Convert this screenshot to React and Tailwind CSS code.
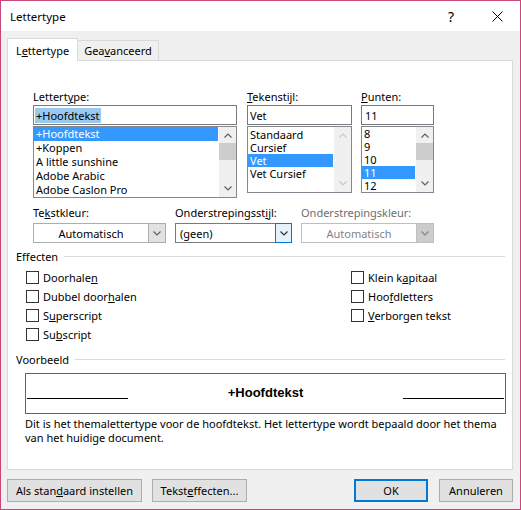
import React from "react";

function U({ children }) {
  return <span className="underline underline-offset-[1px]">{children}</span>;
}

function Chev({ up, color = "#606060" }) {
  return (
    <svg width="8" height="5" viewBox="0 0 8 5" fill="none">
      <path
        d={up ? "M0.5 4.5L4 1L7.5 4.5" : "M0.5 0.5L4 4L7.5 0.5"}
        stroke={color}
        strokeWidth="1.2"
      />
    </svg>
  );
}

function VScroll({ disabled }) {
  const c = disabled ? "#c8c8c8" : "#606060";
  return (
    <div className="w-[17px] shrink-0 bg-[#f0f0f0] flex flex-col">
      <div className="h-[16px] flex items-center justify-center">
        <Chev up color={c} />
      </div>
      {!disabled && <div className="h-[17px] bg-[#cdcdcd]" />}
      <div className="flex-1" />
      <div className="h-[17px] flex items-center justify-center">
        <Chev color={c} />
      </div>
    </div>
  );
}

function Check({ children }) {
  return (
    <div className="h-[19px] flex items-center">
      <div className="w-[13px] h-[13px] border border-[#333333] bg-white shrink-0" />
      <div className="ml-[4px] leading-[15px] whitespace-nowrap">{children}</div>
    </div>
  );
}

function Item({ text, selected, h }) {
  return (
    <div
      className={
        (h === 14 ? "h-[14px] " : "h-[13px] ") +
        "pl-[2px] overflow-hidden flex items-center " +
        (selected ? "bg-[#3399ff] text-white" : "")
      }
    >
      <span className="leading-[12px]">{text}</span>
    </div>
  );
}

export default function App() {
  const lettertypes = [
    "+Hoofdtekst",
    "+Koppen",
    "A little sunshine",
    "Adobe Arabic",
    "Adobe Caslon Pro",
  ];
  const stijlen = ["Standaard", "Cursief", "Vet", "Vet Cursief"];
  const punten = ["8", "9", "10", "11", "12"];

  return (
    <div className="w-[521px] h-[510px] border border-[#c9467b] flex flex-col overflow-hidden font-['Noto_Sans',sans-serif] text-[11px] text-black bg-[#f0f0f0]">
      {/* Title bar */}
      <div className="h-[30px] shrink-0 bg-white flex items-center">
        <div className="pl-[9px] text-[11.5px] leading-[15px]">Lettertype</div>
        <div className="flex-1" />
        <div className="w-[46px] h-[30px] flex items-center justify-center text-[14px]">?</div>
        <div className="w-[46px] h-[30px] flex items-center justify-center">
          <svg width="11" height="11" viewBox="0 0 11 11">
            <path d="M0.5 0.5L10.5 10.5M10.5 0.5L0.5 10.5" stroke="#000" strokeWidth="1" />
          </svg>
        </div>
      </div>

      {/* Body */}
      <div className="flex-1 bg-[#f0f0f0] pl-[6px] pr-[7px] pt-[7px] flex flex-col">
        {/* Tabs */}
        <div className="flex items-end h-[22px] shrink-0">
          <div className="relative z-10 -mb-px h-[23px] w-[71px] bg-white border border-[#d9d9d9] border-b-0 flex items-center justify-center leading-[15px]">
            L<U>e</U>ttertype
          </div>
          <div className="h-[20px] w-[81px] bg-[#f0f0f0] border border-[#d9d9d9] border-b-0 border-l-0 flex items-center justify-center leading-[15px]">
            Gea<U>v</U>anceerd
          </div>
        </div>

        {/* Panel */}
        <div className="h-[410px] shrink-0 bg-white border border-[#d9d9d9] pl-[8px] pr-[7px] pt-[28px] flex flex-col">
          {/* Row 1 */}
          <div className="flex ml-[17px] items-start">
            <div className="w-[204px]">
              <div className="h-[15px] leading-[15px]">
                Lettert<U>y</U>pe:
              </div>
              <div className="mt-[1px] h-[20px] border border-[#7a7a7a] flex items-center pl-[1px]">
                <span className="bg-[#99c9ef] px-[1px] leading-[15px]">+Hoofdtekst</span>
              </div>
              <div className="mt-[1px] h-[72px] border border-[#828790] flex">
                <div className="flex-1 pr-[1px]">
                  {lettertypes.map((t, i) => (
                    <Item key={t} text={t} selected={i === 0} h={14} />
                  ))}
                </div>
                <VScroll />
              </div>
            </div>

            <div className="w-[105px] ml-[10px]">
              <div className="h-[15px] leading-[15px]">
                <U>T</U>ekenstijl:
              </div>
              <div className="mt-[1px] h-[20px] border border-[#7a7a7a] flex items-center pl-[2px] leading-[15px]">
                Vet
              </div>
              <div className="mt-[1px] h-[67px] border border-[#828790] flex">
                <div className="flex-1 pr-[1px] pt-[1px]">
                  {stijlen.map((t, i) => (
                    <Item key={t} text={t} selected={i === 2} h={13} />
                  ))}
                </div>
                <VScroll disabled />
              </div>
            </div>

            <div className="w-[73px] ml-[9px]">
              <div className="h-[15px] leading-[15px]">
                <U>P</U>unten:
              </div>
              <div className="mt-[1px] h-[20px] border border-[#7a7a7a] flex items-center pl-[3px] leading-[15px]">
                11
              </div>
              <div className="mt-[1px] h-[67px] border border-[#828790] flex">
                <div className="flex-1 pr-[1px]">
                  {punten.map((t, i) => (
                    <Item key={t} text={t} selected={i === 3} h={13} />
                  ))}
                </div>
                <VScroll />
              </div>
            </div>
          </div>

          {/* Row 2 */}
          <div className="flex ml-[17px] mt-[7px]">
            <div className="w-[133px]">
              <div className="h-[15px] leading-[15px]">
                Te<U>k</U>stkleur:
              </div>
              <div className="mt-[3px] h-[20px] border border-[#adadad] bg-white flex">
                <div className="flex-1 flex items-center justify-center leading-[15px]">Automatisch</div>
                <div className="w-[17px] bg-[#e1e1e1] border-l border-[#adadad] flex items-center justify-center">
                  <Chev />
                </div>
              </div>
            </div>
            <div className="w-[117px] ml-[9px]">
              <div className="h-[15px] leading-[15px] whitespace-nowrap">
                Onderstrepingsst<U>i</U>jl:
              </div>
              <div className="mt-[3px] h-[20px] border border-[#7a7a7a] bg-white flex">
                <div className="flex-1 flex items-center pl-[4px] leading-[15px]">(geen)</div>
                <div className="w-[17px] -my-px -mr-px bg-[#e5f1fb] border border-[#0078d7] flex items-center justify-center">
                  <Chev color="#333333" />
                </div>
              </div>
            </div>
            <div className="w-[133px] ml-[9px]">
              <div className="h-[15px] leading-[15px] text-[#6d6d6d] whitespace-nowrap">
                Onderstrepingskleur:
              </div>
              <div className="mt-[3px] h-[20px] border border-[#bfbfbf] bg-white flex">
                <div className="flex-1 flex items-center justify-center leading-[15px] text-[#838383]">
                  Automatisch
                </div>
                <div className="w-[17px] bg-[#cccccc] border-l border-[#bfbfbf] flex items-center justify-center">
                  <Chev color="#838383" />
                </div>
              </div>
            </div>
          </div>

          {/* Effecten */}
          <div className="mt-[6px] h-[15px] flex items-center">
            <div className="leading-[15px]">Effecten</div>
            <div className="flex-1 h-px bg-[#dcdcdc] ml-[6px]" />
          </div>
          <div className="mt-[4px] ml-[10px] flex">
            <div className="w-[325px]">
              <Check>
                Doorhale<U>n</U>
              </Check>
              <Check>
                Dubbel door<U>h</U>alen
              </Check>
              <Check>
                S<U>u</U>perscript
              </Check>
              <Check>
                Su<U>b</U>script
              </Check>
            </div>
            <div>
              <Check>
                Klein k<U>a</U>pitaal
              </Check>
              <Check>
                Hoo<U>f</U>dletters
              </Check>
              <Check>
                <U>V</U>erborgen tekst
              </Check>
            </div>
          </div>

          {/* Voorbeeld */}
          <div className="mt-[8px] h-[15px] flex items-center">
            <div className="leading-[15px]">Voorbeeld</div>
            <div className="flex-1 h-px bg-[#dcdcdc] ml-[6px]" />
          </div>
          <div className="mt-[6px] ml-[9px] w-[481px] h-[41px] border border-[#646464] flex items-start">
            <div className="ml-[1px] mt-[24px] w-[101px] h-px bg-black" />
            <div className="flex-1 text-center mt-[10px] leading-[18px] font-['Liberation_Sans',sans-serif] font-bold text-[13px]">
              +Hoofdtekst
            </div>
            <div className="mr-[1px] mt-[24px] w-[101px] h-px bg-black" />
          </div>
          <div className="mt-[3px] ml-[9px] leading-[14px] whitespace-nowrap">
            Dit is het themalettertype voor de hoofdtekst. Het lettertype wordt bepaald door het thema
            <br />
            van het huidige document.
          </div>
        </div>

        {/* Buttons */}
        <div className="mt-[9px] h-[23px] flex shrink-0">
          <div className="w-[135px] h-[23px] bg-[#e1e1e1] border border-[#adadad] flex items-center justify-center leading-[15px] whitespace-nowrap">
            Als stan<U>d</U>aard instellen
          </div>
          <div className="ml-[10px] w-[95px] h-[23px] bg-[#e1e1e1] border border-[#adadad] flex items-center justify-center leading-[15px] whitespace-nowrap">
            Tekst<U>e</U>ffecten...
          </div>
          <div className="flex-1" />
          <div className="w-[74px] h-[23px] bg-[#e1e1e1] border-2 border-[#0078d7] flex items-center justify-center leading-[15px]">
            OK
          </div>
          <div className="ml-[11px] w-[74px] h-[23px] bg-[#e1e1e1] border border-[#adadad] flex items-center justify-center leading-[15px]">
            Annuleren
          </div>
        </div>
      </div>
    </div>
  );
}
